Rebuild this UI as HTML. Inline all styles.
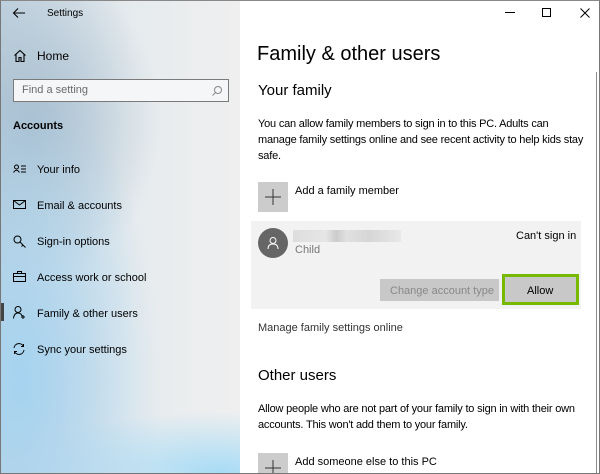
<!DOCTYPE html>
<html><head><meta charset="utf-8"><style>
*{margin:0;padding:0;box-sizing:border-box}
body{width:600px;height:474px;overflow:hidden;font-family:"Liberation Sans",sans-serif;color:#000;position:relative;background:#fff}
.win{position:absolute;inset:0;border:1px solid #777;border-top-color:#888;z-index:5;pointer-events:none}
.side{position:absolute;left:1px;top:1px;width:239px;height:472px;
background:
radial-gradient(ellipse 140px 300px at 20px 380px,#a6d3f0 0%,rgba(166,211,240,0) 100%),
radial-gradient(ellipse 130px 160px at 30px 120px,#a9bfd0 0%,rgba(169,191,208,0) 100%),
radial-gradient(ellipse 200px 60px at 220px 470px,#a9dcf5 0%,rgba(169,220,245,0) 100%),
linear-gradient(90deg,#c3d4e0 0%,#e6ebee 55%,#efefef 100%)}
.t{position:absolute;font-size:12px;white-space:nowrap}
.s{font-size:11px}
.p{letter-spacing:-0.2px;line-height:16px}
.main{position:absolute;left:240px;top:1px;right:1px;bottom:1px;background:#fff;overflow:hidden}
svg{position:absolute}
</style></head><body>
<div class="win"></div>
<div class="side">
<svg style="left:11px;top:6px" width="14" height="12" viewBox="0 0 14 12"><path d="M13 6H2M6 1.5L1.5 6L6 10.5" stroke="#000" fill="none" stroke-width="1.1"/></svg>
<div class="t s" style="left:46px;top:7px;font-size:10px">Settings</div>
<svg style="left:12px;top:48px" width="14" height="14" viewBox="0 0 14 14"><path d="M1.5 6.5L7 1.5l5.5 5M3 5.5V12.5h3v-4h2v4h3V5.5" stroke="#000" fill="none" stroke-width="1.1"/></svg>
<div class="t" style="left:36px;top:48px">Home</div>
<div style="position:absolute;left:12px;top:78px;width:216px;height:23px;border:1px solid #7a7a7a;background:#f4f6f7"></div>
<div class="t s" style="left:21px;top:83px;color:#6b6b6b">Find a setting</div>
<svg style="left:210px;top:84px" width="12" height="12" viewBox="0 0 12 12"><circle cx="7" cy="5" r="3.5" stroke="#888" fill="none"/><path d="M4.5 7.5L1.5 10.5" stroke="#888"/></svg>
<div class="t" style="left:12px;top:119px;font-weight:bold;font-size:11px">Accounts</div>
<svg style="left:12px;top:163px" width="14" height="12" viewBox="0 0 14 12"><circle cx="3.5" cy="3" r="2" stroke="#000" fill="none"/><path d="M0.5 8.5Q3.5 4 6.5 8.5M8 2h5M8 5h5M8 8h5" stroke="#000" fill="none"/></svg>
<div class="t s" style="left:36px;top:163px">Your info</div>
<svg style="left:12px;top:198px" width="14" height="12" viewBox="0 0 14 12"><rect x="0.5" y="1.5" width="12" height="8" stroke="#000" fill="none"/><path d="M0.5 1.5L6.5 6L12.5 1.5" stroke="#000" fill="none"/></svg>
<div class="t s" style="left:36px;top:199px">Email &amp; accounts</div>
<svg style="left:12px;top:234px" width="14" height="14" viewBox="0 0 14 14"><circle cx="4.5" cy="4.5" r="3.5" stroke="#000" fill="none"/><path d="M7 7l5.5 5.5M10 10l-1.5 1.5" stroke="#000" fill="none"/></svg>
<div class="t s" style="left:36px;top:235px">Sign-in options</div>
<svg style="left:12px;top:270px" width="14" height="12" viewBox="0 0 14 12"><rect x="0.5" y="2.5" width="12" height="8" stroke="#000" fill="none"/><path d="M4.5 2.5V0.5h4v2M0.5 5.5h12" stroke="#000" fill="none"/></svg>
<div class="t s" style="left:36px;top:271px">Access work or school</div>
<div style="position:absolute;left:0;top:302px;width:3px;height:18px;background:#444"></div>
<svg style="left:12px;top:305px" width="14" height="14" viewBox="0 0 14 14"><circle cx="5" cy="3.5" r="3" stroke="#000" fill="none"/><path d="M0.5 12.5Q1 7 5 7Q8 7 9 10M10 9v4M8 11h4" stroke="#000" fill="none"/></svg>
<div class="t s" style="left:36px;top:307px">Family &amp; other users</div>
<svg style="left:11px;top:341px" width="14" height="14" viewBox="0 0 14 14"><path d="M2 6A5 5 0 0 1 11.5 4.5M12 8A5 5 0 0 1 2.5 9.5M11.5 2v2.5H9M2.5 12V9.5H5" stroke="#000" fill="none"/></svg>
<div class="t s" style="left:36px;top:343px">Sync your settings</div>
</div>
<div class="main">
<svg style="left:265px;top:10px" width="10" height="4"><path d="M0 1.5H10" stroke="#000"/></svg>
<svg style="left:302px;top:7px" width="10" height="10"><rect x="0.5" y="0.5" width="8" height="8" stroke="#000" fill="none"/></svg>
<svg style="left:340px;top:7px" width="10" height="10"><path d="M0.5 0.5L9.5 9.5M9.5 0.5L0.5 9.5" stroke="#000"/></svg>
<div class="t" style="left:17px;top:42px;font-size:20px">Family &amp; other users</div>
<div class="t" style="left:18px;top:81px;font-size:15px">Your family</div>
<div class="t s p" style="left:18px;top:115px">You can allow family members to sign in to this PC. Adults can<br>manage family settings online and see recent activity to help kids stay<br>safe.</div>
<div style="position:absolute;left:18px;top:181px;width:30px;height:30px;background:#ccc"></div>
<svg style="left:25px;top:188px" width="16" height="16"><path d="M8 0V16M0 8H16" stroke="#333"/></svg>
<div class="t s" style="left:55px;top:184px">Add a family member</div>
<div style="position:absolute;left:11px;top:220px;width:330px;height:88px;background:#f2f2f2"></div>
<div style="position:absolute;left:18px;top:227px;width:30px;height:30px;border-radius:50%;background:#666"></div>
<svg style="left:25px;top:234px" width="16" height="16" viewBox="0 0 16 16"><circle cx="8" cy="5.5" r="3" stroke="#fff" fill="none"/><path d="M3 14Q3 9 8 9Q13 9 13 14" stroke="#fff" fill="none"/></svg>
<div style="position:absolute;left:53px;top:229px;width:108px;height:12px;background:linear-gradient(90deg,#ddd 0,#e6e6e6 30%,#ccc 40%,#e0e0e0 50%,#d6d6d6 70%,#e8e8e8 100%)"></div>
<div class="t s" style="left:55px;top:243px;color:#777">Child</div>
<div class="t s" style="left:276px;top:229px">Can't sign in</div>
<div style="position:absolute;left:140px;top:278px;width:119px;height:22px;background:#c8c8c8"></div>
<div class="t s" style="left:150px;top:284px;color:#888">Change account type</div>
<div style="position:absolute;left:262px;top:273px;width:77px;height:31px;border:3px solid #77b800;background:#c8c8c8"></div>
<div class="t s" style="left:287px;top:284px">Allow</div>
<div class="t s" style="left:18px;top:321px;color:#333">Manage family settings online</div>
<div class="t" style="left:18px;top:366px;font-size:15px">Other users</div>
<div class="t s p" style="left:18px;top:400px">Allow people who are not part of your family to sign in with their own<br>accounts. This won't add them to your family.</div>
<div style="position:absolute;left:18px;top:452px;width:30px;height:30px;background:#ccc"></div>
<svg style="left:25px;top:459px" width="16" height="16"><path d="M8 0V16M0 8H16" stroke="#333"/></svg>
<div class="t s" style="left:55px;top:455px">Add someone else to this PC</div>
<div style="position:absolute;left:356px;top:71px;width:1px;height:410px;background:#8a8a8a"></div>
</div>
</body></html>
